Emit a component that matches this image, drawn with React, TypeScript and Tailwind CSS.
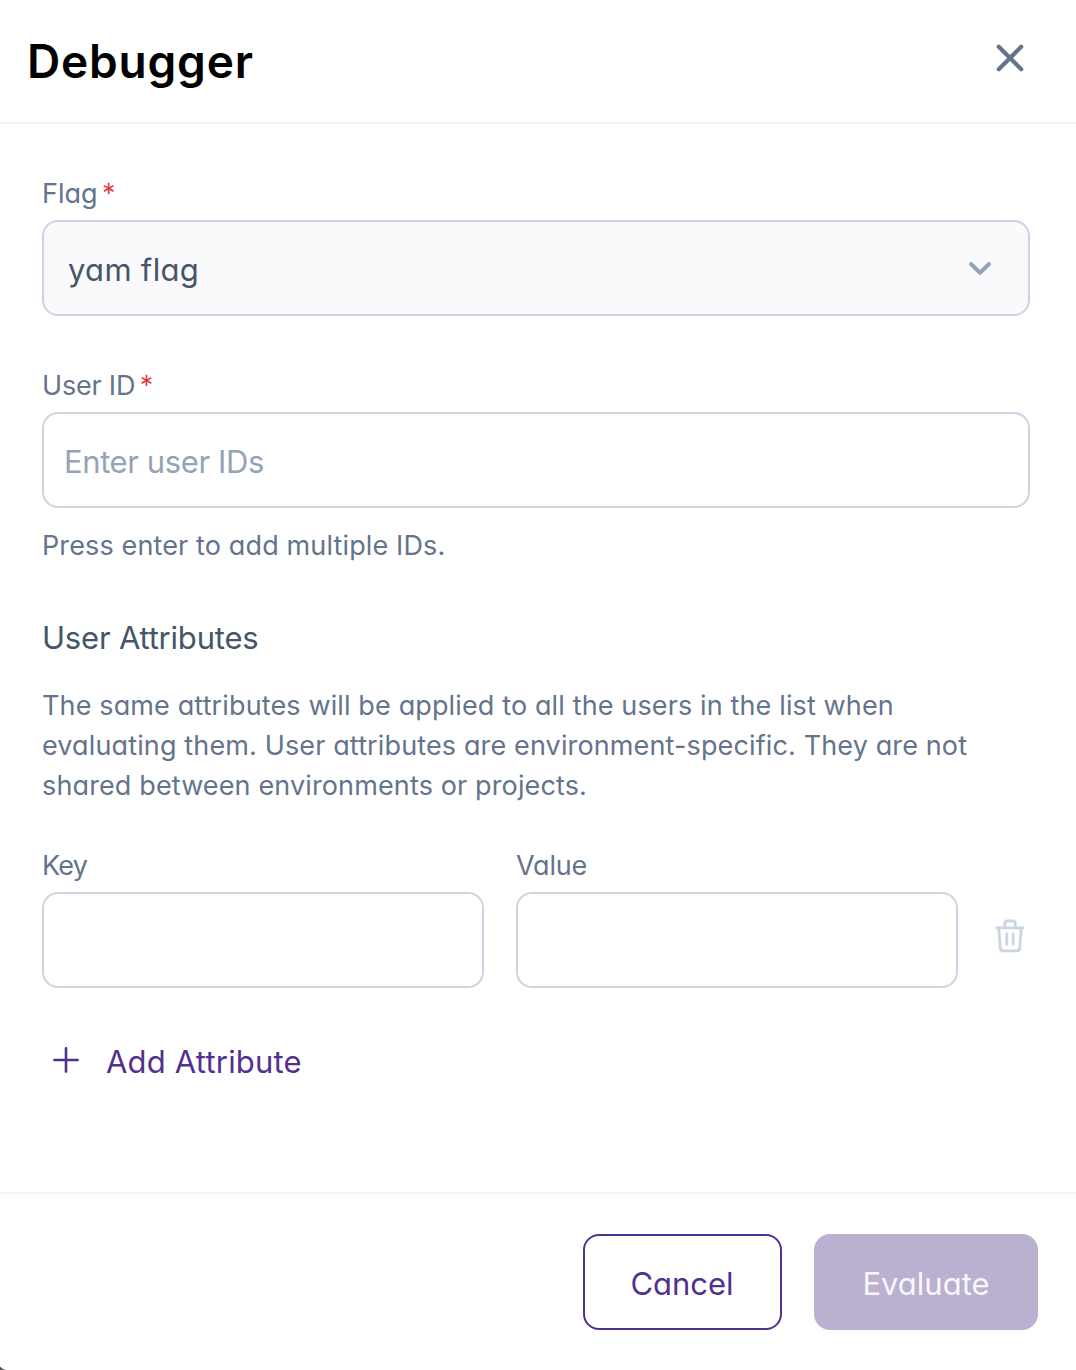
import { useState } from "react";
import type { ReactNode } from "react";

interface LabelProps {
  htmlFor: string;
  required?: boolean;
  children: ReactNode;
}

interface TextFieldProps {
  id: string;
  value: string;
  placeholder?: string;
  onChange: (value: string) => void;
}

const CloseIcon = () => (
  <svg width="28" height="28" viewBox="0 0 28 28" fill="none" stroke="currentColor" strokeWidth="4.2" strokeLinecap="round">
    <path d="M2.8 2.8L25.2 25.2M25.2 2.8L2.8 25.2" />
  </svg>
);

const ChevronIcon = () => (
  <svg width="24" height="16" viewBox="0 0 24 16" fill="none" stroke="currentColor" strokeWidth="4" strokeLinecap="round" strokeLinejoin="round">
    <path d="M3 4L12 12.8L21 4" />
  </svg>
);

const TrashIcon = () => (
  <svg width="32" height="36" viewBox="0 0 32 36" fill="none" stroke="currentColor" strokeWidth="2.8" strokeLinecap="round" strokeLinejoin="round">
    <path d="M2.9 9.8H29.1" />
    <path d="M10.8 9.8V5.2Q10.8 3 13 3H19Q21.2 3 21.2 5.2V9.8" />
    <path d="M4.8 9.8L6.2 29.8Q6.4 32.8 9.6 32.8H22.4Q25.6 32.8 25.8 29.8L27.2 9.8" />
    <path d="M12.8 16V26.2M19.2 16V26.2" />
  </svg>
);

const PlusIcon = () => (
  <svg width="28" height="28" viewBox="0 0 28 28" fill="none" stroke="currentColor" strokeWidth="2.6" strokeLinecap="round">
    <path d="M14 2.4V25.6M2.4 14H25.6" />
  </svg>
);

const Label = ({ htmlFor, required, children }: LabelProps) => (
  <label htmlFor={htmlFor} className="flex h-10 items-center text-[27px] leading-10 text-[#64748b]">
    {children}
    {required && <span className="ml-1 pt-1 font-['Lato',sans-serif] text-[34px] text-[#dc3535]">*</span>}
  </label>
);

const TextField = ({ id, value, placeholder, onChange }: TextFieldProps) => (
  <input
    id={id}
    value={value}
    placeholder={placeholder}
    onChange={(e) => onChange(e.target.value)}
    className="mt-1.5 h-24 w-full rounded-2xl border-2 border-[#cbd5e1] bg-white px-5 pt-[3px] text-[31px] tracking-[-0.4px] text-[#475569] outline-none placeholder:text-[#94a3b8]"
  />
);

const App = () => {
  const [userId, setUserId] = useState("");
  const [key, setKey] = useState("");
  const [value, setValue] = useState("");

  return (
    <div className="relative flex h-[1370px] w-[1076px] flex-col overflow-hidden bg-white font-['Inter',sans-serif] [font-feature-settings:'cv11']">
      <header className="flex h-[124px] items-center justify-between border-b-2 border-[#f1f5f9] pr-[52px] pl-[27px]">
        <h1 className="text-[46px] leading-none font-semibold tracking-[0.8px] text-black">Debugger</h1>
        <button aria-label="Close" className="-mt-1.5 text-[#64748b]">
          <CloseIcon />
        </button>
      </header>

      <main className="flex h-[1068px] flex-col pt-[50px] pr-[46px] pl-[42px]">
        <Label htmlFor="flag" required>
          Flag
        </Label>
        <button
          id="flag"
          className="mt-1.5 flex h-24 items-center justify-between rounded-2xl border-2 border-[#cbd5e1] bg-[#fafafc] pr-9 pl-6 text-[31px] text-[#475569]"
        >
          <span className="pt-1 tracking-[0.3px]">yam flag</span>
          <span className="text-[#94a3b8]">
            <ChevronIcon />
          </span>
        </button>

        <div className="mt-[50px]">
          <Label htmlFor="user-id" required>
            <span className="tracking-[-0.2px]">User ID</span>
          </Label>
          <TextField id="user-id" value={userId} placeholder="Enter user IDs" onChange={setUserId} />
        </div>
        <p className="mt-[18px] text-[27px] leading-10 tracking-[0.13px] text-[#64748b]">Press enter to add multiple IDs.</p>

        <h2 className="mt-[52px] text-[31px] leading-10 tracking-[-0.2px] text-[#475569]">User Attributes</h2>
        <p className="mt-7 text-[27px] leading-10 tracking-[0.13px] whitespace-nowrap text-[#64748b]">
          The same attributes will be applied to all the users in the list when
          <br />
          evaluating them. User attributes are environment-specific. They are not
          <br />
          shared between environments or projects.
        </p>

        <div className="mt-10 flex">
          <div className="w-[442px]">
            <Label htmlFor="key">
              <span className="tracking-[-0.8px]">Key</span>
            </Label>
            <TextField id="key" value={key} onChange={setKey} />
          </div>
          <div className="ml-8 w-[442px]">
            <Label htmlFor="value">
              <span className="tracking-[-0.2px]">Value</span>
            </Label>
            <TextField id="value" value={value} onChange={setValue} />
          </div>
          <button aria-label="Delete attribute" className="mt-[72px] ml-9 h-9 text-[#cbd5e1]">
            <TrashIcon />
          </button>
        </div>

        <button className="mt-[50px] ml-2.5 flex items-center self-start text-[31px] leading-10 text-[#51318f]">
          <PlusIcon />
          <span className="ml-[26px] pt-1 tracking-[0.2px]">Add Attribute</span>
        </button>
      </main>

      <footer className="flex h-[178px] justify-end gap-8 border-t-2 border-[#f1f5f9] pt-10 pr-[38px]">
        <button className="h-24 w-[199px] rounded-2xl border-2 border-[#51318f] pt-1 pr-px text-[31px] text-[#51318f]">Cancel</button>
        <button disabled className="h-24 w-56 rounded-2xl bg-[#bab0d0] pt-1 text-[31px] text-[#f8f7fb]">
          Evaluate
        </button>
      </footer>

      {/* rounded window corner */}
      <svg className="absolute bottom-0 left-0 text-neutral-600" width="6" height="4" viewBox="0 0 6 4" fill="currentColor">
        <path d="M0 0.5Q2 3 6 4H0Z" />
      </svg>
    </div>
  );
};

export default App;
